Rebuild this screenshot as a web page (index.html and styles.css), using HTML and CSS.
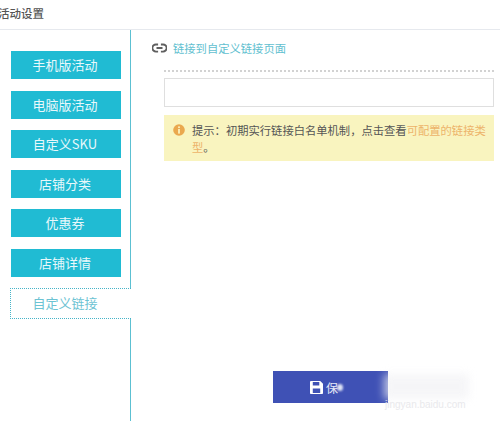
FILE: index.html
```html
<!DOCTYPE html>
<html lang="zh">
<head>
<meta charset="utf-8">
<title>活动设置</title>
<link rel="stylesheet" href="styles.css">
</head>
<body>
<header class="top"><span class="top-title">活动设置</span></header>
<div class="layout">
  <nav class="side">
    <a class="tab">手机版活动</a>
    <a class="tab">电脑版活动</a>
    <a class="tab">自定义SKU</a>
    <a class="tab">店铺分类</a>
    <a class="tab">优惠券</a>
    <a class="tab">店铺详情</a>
    <a class="tab tab-active">自定义链接</a>
  </nav>
  <main class="main">
    <div class="link-row">
      <svg class="link-icon" viewBox="0 0 16 10" width="15" height="10" aria-hidden="true">
        <path d="M6.5 1.200H4.200a3.800 3.800 0 0 0 0 7.600h2.300M9.500 1.200h2.300a3.800 3.800 0 0 1 0 7.600H9.500M4.800 5h6.400" fill="none" stroke="#5f5f5f" stroke-width="2"/>
      </svg>
      <span class="link-text">链接到自定义链接页面</span>
    </div>
    <div class="content">
      <div class="dash"></div>
      <input class="field" type="text">
      <div class="notice">
        <svg class="notice-icon" viewBox="0 0 13 13" width="12" height="12" aria-hidden="true">
          <circle cx="6.500" cy="6.500" r="6.300" fill="#eaa84e"/>
          <rect x="5.600" y="2.600" width="1.800" height="1.800" fill="#fbf6c6"/>
          <rect x="5.600" y="5.400" width="1.800" height="5" fill="#fbf6c6"/>
        </svg>
        <p class="notice-text">提示：初期实行链接白名单机制，点击查看<span class="notice-link">可配置的链接类型</span>。</p>
      </div>
    </div>
    <div class="actions">
      <button class="save" type="button">
        <svg viewBox="0 0 14 14" width="13" height="13" aria-hidden="true">
          <path fill-rule="evenodd" d="M0 1.200C0 .5.500 0 1.200 0H11l3 3v9.800c0 .7-.5 1.200-1.200 1.200H1.200C.5 14 0 13.500 0 12.800ZM3 1v3.800h7V1ZM3 8v5h8V8Z" fill="#fff"/>
        </svg>
        <span class="save-label">保</span>
      </button>
      <div class="smudge"></div>
      <span class="mark">jingyan.baidu.com</span>
    </div>
  </main>
</div>
</body>
</html>
```
FILE: styles.css
```css
* { box-sizing: border-box; }
html, body { margin: 0; height: 100%; }
body {
  width: 500px;
  height: 421px;
  overflow: hidden;
  background: #fff;
  font-family: "Noto Sans CJK SC", "Liberation Sans", sans-serif;
  color: #555;
  display: flex;
  flex-direction: column;
}
.top {
  height: 30px;
  flex: none;
  border-bottom: 1px solid #e6e9ee;
  display: flex;
  align-items: center;
  padding-bottom: 3px;
  overflow: hidden;
}
.top-title {
  margin-left: -2px;
  font-size: 11.500px;
  font-weight: 500;
  color: #555;
}
.layout { flex: 1; display: flex; min-height: 0; }
.side {
  width: 131px;
  flex: none;
  border-right: 1px solid #5cc0d2;
  padding: 21px 0 0 11px;
  display: flex;
  flex-direction: column;
}
.tab {
  width: 110px;
  height: 28px;
  margin-bottom: 11.500px;
  padding-right: 2px;
  background: #20bbd3;
  color: #e8f8fb;
  font-size: 13px;
  line-height: 27px;
  text-align: center;
}
.tab-active {
  width: 121px;
  height: 31px;
  margin: -0.500px -1px 0 -1px;
  padding-right: 12px;
  background: #fff;
  color: #6cc3d3;
  line-height: 28px;
  border: 1px dotted #46b4c8;
  border-right: 0;
}
.main { flex: 1; display: flex; flex-direction: column; min-width: 0; }
.link-row {
  height: 14px;
  margin: 11px 0 0 21px;
  display: flex;
  align-items: center;
  gap: 6px;
}
.link-icon { flex: none; }
.link-text { font-size: 11.300px; color: #62bfd0; }
.content { margin: 15px 6px 0 33px; }
.dash { border-top: 2px dotted #d2d2d2; margin-right: 0; }
.field {
  display: block;
  width: 100%;
  height: 29px;
  margin: 6px 0 0;
  border: 1px solid #dfdfdf;
  background: #fff;
}
.notice {
  height: 46px;
  margin-top: 8px;
  padding: 7px 8px 0 9px;
  background: #f9f4bf;
  display: flex;
  gap: 7px;
}
.notice-icon { flex: none; margin-top: 2px; }
.notice-text {
  margin: 0;
  font-size: 11.300px;
  line-height: 17px;
  color: #555;
}
.notice-link { color: #edb36a; }
.actions {
  position: relative;
  margin: auto 0 18px 142px;
  height: 32px;
}
.save {
  width: 115px;
  height: 32px;
  padding: 0 0 0 37px;
  border: 0;
  background: #3f51b5;
  color: #e6e9f7;
  font: inherit;
  font-size: 12px;
  display: flex;
  align-items: center;
  gap: 3px;
}
.save-label { position: relative; }
.save-label::after {
  content: "";
  position: absolute;
  left: 11px;
  top: 5px;
  width: 6px;
  height: 7px;
  border-radius: 50%;
  background: #dfe4f6;
  filter: blur(1px);
}
.smudge {
  position: absolute;
  left: 111px;
  top: 3px;
  width: 85px;
  height: 25px;
  background: #f2f2f5;
  filter: blur(4px);
  opacity: .7;
}
.mark {
  position: absolute;
  left: 112px;
  top: 28px;
  font-family: "Liberation Sans", sans-serif;
  font-size: 10px;
  color: #e9e9ec;
  white-space: nowrap;
}
```
